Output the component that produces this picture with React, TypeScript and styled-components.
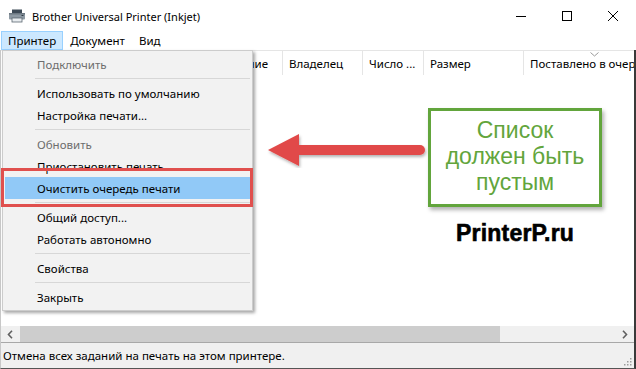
import React from "react";
import styled, { createGlobalStyle } from "styled-components";

const GlobalStyle = createGlobalStyle`
  html, body {
    margin: 0;
    padding: 0;
    background: #ffffff;
  }
  body {
    font-family: "Noto Sans", "Open Sans", sans-serif;
    font-size: 11.5px;
    color: #000;
  }
`;

const Window = styled.div`
  width: 636px;
  height: 369px;
  display: flex;
  flex-direction: column;
  position: relative;
  overflow: hidden;
  background: #fff;
`;

const TitleBar = styled.div`
  height: 31px;
  display: flex;
  align-items: center;
  flex-shrink: 0;
`;

const TitleIcon = styled.div`
  width: 30px;
  display: flex;
  justify-content: center;
  padding-left: 2px;
`;

const TitleText = styled.div`
  flex: 1;
  font-size: 11px;
  padding-top: 1px;
`;

const Controls = styled.div`
  display: flex;
  height: 100%;
`;

const ControlButton = styled.div`
  width: 46px;
  height: 100%;
  display: flex;
  align-items: center;
  justify-content: center;
`;

const MenuBar = styled.div`
  height: 19px;
  display: flex;
  align-items: stretch;
  padding-left: 1px;
  flex-shrink: 0;
`;

const MenuTitle = styled.div<{ $open?: boolean }>`
  padding: 0 6px;
  display: flex;
  align-items: center;
  box-sizing: border-box;
  background: ${(p) => (p.$open ? "#cce8ff" : "transparent")};
  border: 1px solid ${(p) => (p.$open ? "#99d1ff" : "transparent")};
`;

const Frame = styled.div`
  flex: 1;
  display: flex;
  flex-direction: column;
  border-right: 2px solid #3a3a3a;
  border-left: 1px solid #c8c8c8;
  border-bottom: 1px solid #555;
  min-height: 0;
`;

const ListView = styled.div`
  flex: 1;
  display: flex;
  flex-direction: column;
  border-top: 1px solid #e5e5e5;
  min-height: 0;
`;

const Header = styled.div`
  height: 24px;
  display: flex;
  flex-shrink: 0;
`;

const HeaderCell = styled.div<{ $w: number; $last?: boolean }>`
  width: ${(p) => p.$w}px;
  flex-shrink: 0;
  box-sizing: border-box;
  padding-left: 6px;
  display: flex;
  align-items: center;
  white-space: nowrap;
  overflow: hidden;
  position: relative;
  border-right: ${(p) => (p.$last ? "none" : "1px solid #e5e5e5")};
`;

const SortMark = styled.svg`
  position: absolute;
  top: 1px;
  left: 66px;
`;

const ListBody = styled.div`
  flex: 1;
`;

const HScroll = styled.div`
  height: 16px;
  display: flex;
  align-items: stretch;
  background: #f0f0f0;
  flex-shrink: 0;
`;

const ScrollArrow = styled.div`
  width: 18px;
  display: flex;
  align-items: center;
  justify-content: center;
  flex-shrink: 0;
`;

const ScrollTrack = styled.div`
  flex: 1;
  display: flex;
  padding: 0 1px;
`;

const ScrollThumb = styled.div`
  width: 480px;
  background: #cdcdcd;
`;

const StatusBar = styled.div`
  height: 25px;
  border-top: 1px solid #a8a8a8;
  background: #f0f0f0;
  display: flex;
  align-items: center;
  justify-content: space-between;
  padding-left: 2px;
  flex-shrink: 0;
`;

const Grip = styled.svg`
  align-self: flex-end;
  margin: 0 2px 2px 0;
`;

const Dropdown = styled.div`
  position: absolute;
  left: 2px;
  top: 50px;
  width: 251px;
  box-sizing: border-box;
  background: #f2f2f2;
  border: 1px solid #cccccc;
  box-shadow: 2px 2px 3px rgba(0, 0, 0, 0.35);
  padding: 2px;
  display: flex;
  flex-direction: column;
`;

const MenuItem = styled.div<{ $disabled?: boolean; $active?: boolean }>`
  height: 22px;
  display: flex;
  align-items: center;
  padding-left: 32px;
  color: ${(p) => (p.$disabled ? "#6d6d6d" : "#000")};
  background: ${(p) => (p.$active ? "#91c9f7" : "transparent")};
`;

const Separator = styled.div`
  height: 1px;
  background: #d7d7d7;
  margin: 3px 0 3px 30px;
`;

const Highlight = styled.div`
  position: absolute;
  left: 1px;
  top: 168px;
  width: 252px;
  height: 39px;
  box-sizing: border-box;
  border: 3px solid #e0504e;
`;

const Arrow = styled.svg`
  position: absolute;
  left: 264px;
  top: 132px;
`;

const Note = styled.div`
  position: absolute;
  left: 428px;
  top: 108px;
  width: 174px;
  height: 99px;
  box-sizing: border-box;
  border: 3px solid #62a53c;
  background: #fff;
  box-shadow: 2px 3px 4px rgba(0, 0, 0, 0.3);
  display: flex;
  flex-direction: column;
  align-items: center;
  justify-content: center;
  font-family: "Liberation Sans", Arial, sans-serif;
  font-size: 23px;
  line-height: 26px;
  color: #62a53c;
  text-align: center;
  padding-bottom: 4px;
`;

const Watermark = styled.div`
  position: absolute;
  left: 456px;
  top: 220px;
  font-family: "Liberation Sans", Arial, sans-serif;
  font-weight: 700;
  font-size: 23px;
  letter-spacing: 0.2px;
  color: #000;
  -webkit-text-stroke: 0.6px #000;
`;

const PrinterIcon = () => (
  <svg width="18" height="14" viewBox="0 0 18 14">
    <rect x="4" y="0.5" width="10" height="4" fill="#3d4a56" />
    <rect x="1" y="4" width="16" height="6.5" rx="1" fill="#8d99a3" />
    <rect x="1" y="4" width="16" height="1.5" fill="#6c7882" />
    <rect x="4" y="9" width="10" height="4" fill="#e9edf0" stroke="#5b6670" strokeWidth="0.8" />
    <rect x="13.5" y="6" width="2" height="1" fill="#2f3a44" />
  </svg>
);

const columns = [
  { title: "", w: 202 },
  { title: "Состояние", w: 80 },
  { title: "Владелец", w: 80 },
  { title: "Число ...", w: 61 },
  { title: "Размер", w: 100 },
  { title: "Поставлено в очередь", w: 110, last: true },
];

type Entry =
  | { sep: true }
  | { label: string; disabled?: boolean; active?: boolean };

const menu: Entry[] = [
  { label: "Подключить", disabled: true },
  { sep: true },
  { label: "Использовать по умолчанию" },
  { label: "Настройка печати..." },
  { sep: true },
  { label: "Обновить", disabled: true },
  { label: "Приостановить печать" },
  { label: "Очистить очередь печати", active: true },
  { sep: true },
  { label: "Общий доступ..." },
  { label: "Работать автономно" },
  { sep: true },
  { label: "Свойства" },
  { sep: true },
  { label: "Закрыть" },
];

export default function App() {
  return (
    <>
      <GlobalStyle />
      <Window>
        <TitleBar>
          <TitleIcon>
            <PrinterIcon />
          </TitleIcon>
          <TitleText>Brother Universal Printer (Inkjet)</TitleText>
          <Controls>
            <ControlButton>
              <svg width="12" height="12" viewBox="0 0 12 12">
                <line x1="1" y1="6.5" x2="11" y2="6.5" stroke="#000" strokeWidth="1" />
              </svg>
            </ControlButton>
            <ControlButton>
              <svg width="12" height="12" viewBox="0 0 12 12">
                <rect x="1.5" y="1.5" width="9" height="9" fill="none" stroke="#000" strokeWidth="1" />
              </svg>
            </ControlButton>
            <ControlButton>
              <svg width="12" height="12" viewBox="0 0 12 12">
                <path d="M1 1 L11 11 M11 1 L1 11" stroke="#000" strokeWidth="1" />
              </svg>
            </ControlButton>
          </Controls>
        </TitleBar>

        <MenuBar>
          <MenuTitle $open>Принтер</MenuTitle>
          <MenuTitle>Документ</MenuTitle>
          <MenuTitle>Вид</MenuTitle>
        </MenuBar>

        <Frame>
          <ListView>
            <Header>
              {columns.map((c, i) => (
                <HeaderCell key={i} $w={c.w} $last={c.last}>
                  {c.title}
                  {c.last && (
                    <SortMark width="9" height="5" viewBox="0 0 9 5">
                      <path d="M0.5 0.5 L4.5 4 L8.5 0.5" fill="none" stroke="#9a9a9a" strokeWidth="1" />
                    </SortMark>
                  )}
                </HeaderCell>
              ))}
            </Header>
            <ListBody />
          </ListView>
          <HScroll>
            <ScrollArrow>
              <svg width="6" height="9" viewBox="0 0 6 9">
                <path d="M5 0.8 L1.5 4.5 L5 8.2" fill="none" stroke="#606060" strokeWidth="1.6" />
              </svg>
            </ScrollArrow>
            <ScrollTrack>
              <ScrollThumb />
            </ScrollTrack>
            <ScrollArrow>
              <svg width="6" height="9" viewBox="0 0 6 9">
                <path d="M1 0.8 L4.5 4.5 L1 8.2" fill="none" stroke="#606060" strokeWidth="1.6" />
              </svg>
            </ScrollArrow>
          </HScroll>
          <StatusBar>
            <span>Отмена всех заданий на печать на этом принтере.</span>
            <Grip width="10" height="10" viewBox="0 0 10 10">
              {[
                [8, 2], [8, 5], [5, 5], [8, 8], [5, 8], [2, 8],
              ].map(([x, y]) => (
                <rect key={`${x}-${y}`} x={x} y={y} width="1.5" height="1.5" fill="#9c9c9c" />
              ))}
            </Grip>
          </StatusBar>
        </Frame>

        <Dropdown>
          {menu.map((m, i) =>
            "sep" in m ? (
              <Separator key={i} />
            ) : (
              <MenuItem key={i} $disabled={m.disabled} $active={m.active}>
                {m.label}
              </MenuItem>
            )
          )}
        </Dropdown>
        <Highlight />

        <Arrow width="166" height="36" viewBox="0 0 166 36">
          <defs>
            <filter id="ash" x="-10%" y="-30%" width="120%" height="160%">
              <feDropShadow dx="1" dy="2" stdDeviation="1.5" floodColor="#000" floodOpacity="0.3" />
            </filter>
          </defs>
          <g filter="url(#ash)">
            <line x1="30" y1="18" x2="156" y2="18" stroke="#e14a48" strokeWidth="10" strokeLinecap="round" />
            <polygon points="4,18 35,2 35,34" fill="#e14a48" />
          </g>
        </Arrow>

        <Note>
          <div>Список</div>
          <div>должен быть</div>
          <div>пустым</div>
        </Note>

        <Watermark>PrinterP.ru</Watermark>
      </Window>
    </>
  );
}
